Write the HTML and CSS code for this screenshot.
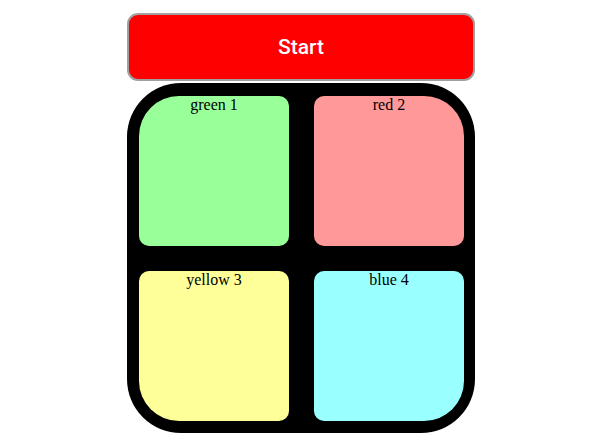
FILE: index.html
```html
<!DOCTYPE html>
<html lang="en">

<head>
    <meta charset="UTF-8">
    <title>Simon</title>
    <link rel="stylesheet" href="styles.css">
</head>

<body>
    <div class="game">
        <button class="start-btn">Start</button>

        <div class="board">
            <div class="pad green">green 1</div>
            <div class="pad red">red 2</div>
            <div class="pad yellow">yellow 3</div>
            <div class="pad blue">blue 4</div>
        </div>
    </div>
</body>

</html>
```

FILE: styles.css
```css
* {
    margin: 0;
    padding: 0;
    box-sizing: border-box;
}

body {
    font-family: 'Liberation Serif', 'Times New Roman', serif;
    font-size: 16px;
    background: #ffffff;
    color: #000000;
}

.game {
    width: 348px;
    margin: 13px 0 0 127px;
    display: flex;
    flex-direction: column;
    gap: 2px;
}

.start-btn {
    height: 68px;
    width: 100%;
    background: #ff0000;
    color: #ffffff;
    border: 2px solid #a0a0a0;
    border-radius: 11px;
    font-family: Roboto, 'Liberation Sans', Arial, sans-serif;
    font-size: 21px;
    font-weight: 500;
}

.board {
    background: #000000;
    border-radius: 54px;
    height: 350px;
    padding: 13px 11px 12px 12px;
    display: grid;
    grid-template-columns: 150px 150px;
    grid-template-rows: 150px 150px;
    gap: 25px;
}

.pad {
    text-align: center;
    border-radius: 10px;
}

.green {
    background: #99ff99;
    border-top-left-radius: 40px;
}

.red {
    background: #ff9999;
    border-top-right-radius: 40px;
}

.yellow {
    background: #ffff99;
    border-bottom-left-radius: 40px;
}

.blue {
    background: #99ffff;
    border-bottom-right-radius: 40px;
}
```
